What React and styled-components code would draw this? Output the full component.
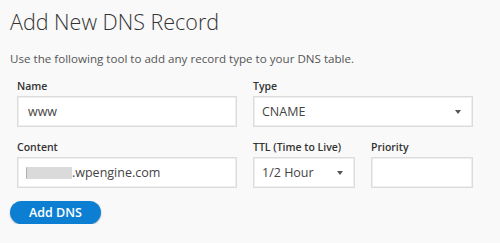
import React from "react";
import styled, { createGlobalStyle } from "styled-components";

const GlobalStyle = createGlobalStyle`
  body {
    margin: 0;
    background: #f9f9f9;
    font-family: "Open Sans", "Liberation Sans", sans-serif;
  }
`;

const App = () => {
  return (
    <>
      <GlobalStyle />
      <Page>
        <Title>Add New DNS Record</Title>
        <Intro>Use the following tool to add any record type to your DNS table.</Intro>
        <Form>
          <Field>
            <Label>Name</Label>
            <Input defaultValue="www" />
          </Field>
          <Field>
            <Label>Type</Label>
            <Select>
              <span>CNAME</span>
              <Caret />
            </Select>
          </Field>
          <Field>
            <Label>Content</Label>
            <FakeInput>
              <Blur />
              <span>.wpengine.com</span>
            </FakeInput>
          </Field>
          <SubRow>
            <Field>
              <Label>TTL (Time to Live)</Label>
              <Select>
                <span>1/2 Hour</span>
                <Caret />
              </Select>
            </Field>
            <Field>
              <Label>Priority</Label>
              <Input />
            </Field>
          </SubRow>
        </Form>
        <Button>Add DNS</Button>
      </Page>
    </>
  );
};

export default App;

const Page = styled.div`
  padding: 9px 10px 0 10px;
`;
const Title = styled.h1`
  margin: 0;
  font-size: 21.5px;
  font-weight: 300;
  color: #333;
  line-height: 26px;
`;
const Intro = styled.p`
  margin: 15px 0 0 0;
  font-size: 11.6px;
  color: #555;
  line-height: 18px;
`;
const Form = styled.div`
  display: grid;
  grid-template-columns: 220px 220px;
  column-gap: 16px;
  row-gap: 15px;
  padding: 13px 7px 0 7px;
`;
const SubRow = styled.div`
  display: grid;
  grid-template-columns: 1fr 1fr;
  column-gap: 16px;
`;
const Field = styled.div`
  display: flex;
  flex-direction: column;
  gap: 5px;
`;
const Label = styled.label`
  font-size: 10.5px;
  font-weight: 600;
  color: #333;
  line-height: 10px;
  height: 10px;
`;
const boxStyles = `
  box-sizing: border-box;
  height: 31px;
  background: #fff;
  border: 1px solid #dcdcdc;
  box-shadow: inset 0 0 0 1px #eee;
  font-family: "Open Sans", "Liberation Sans", sans-serif;
  font-size: 12.5px;
  color: #444;
`;
const Input = styled.input`
  ${boxStyles}
  width: 100%;
  padding: 0 10px;
  outline: none;
`;
const FakeInput = styled.div`
  ${boxStyles}
  display: flex;
  align-items: center;
  padding: 0 8px;
`;
const Blur = styled.span`
  display: inline-block;
  width: 45px;
  height: 12px;
  background: #dadada;
  border-left: 1px solid #b0b0b0;
  border-radius: 1px;
  filter: blur(0.5px);
`;
const Select = styled.div`
  ${boxStyles}
  display: flex;
  align-items: center;
  justify-content: space-between;
  padding: 0 11px 0 8px;
`;
const Caret = styled.span`
  width: 0;
  height: 0;
  border-left: 3.5px solid transparent;
  border-right: 3.5px solid transparent;
  border-top: 4px solid #555;
`;
const Button = styled.button`
  margin-top: 13px;
  width: 91px;
  height: 23px;
  border: none;
  border-radius: 12px;
  background: #0c7fd3;
  box-shadow: 0 1px 2px rgba(0, 0, 0, 0.25);
  color: #fff;
  font-family: "Open Sans", "Liberation Sans", sans-serif;
  font-size: 12.5px;
  font-weight: 600;
  cursor: pointer;
`;
